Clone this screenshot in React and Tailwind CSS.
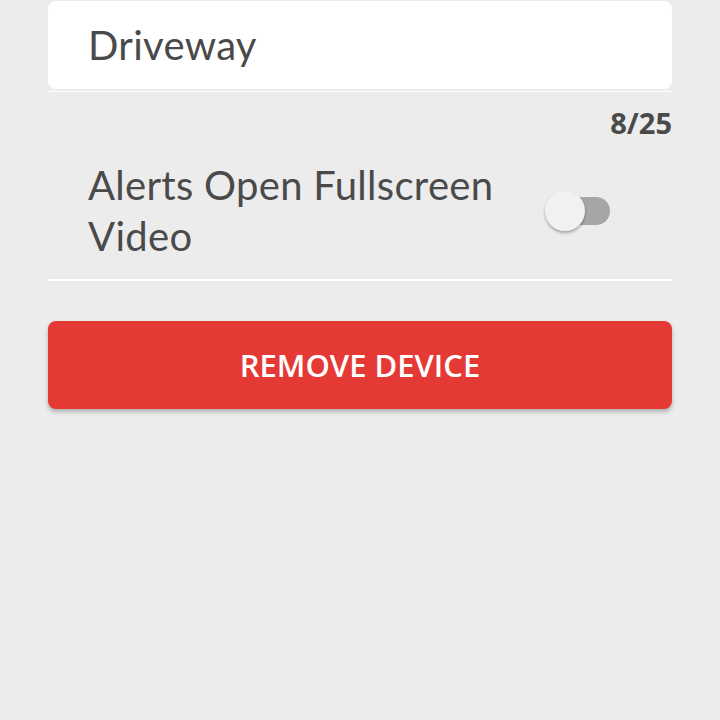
export default function App() {
  return (
    <div className="min-h-[720px] w-[720px] bg-[#ececec] px-[48px] pt-[1px]" style={{ fontFamily: "Lato, 'Open Sans', sans-serif" }}>
      {/* name field */}
      <div className="flex h-[88px] items-center rounded-lg bg-white pl-[40px]">
        <span className="text-[40px] leading-none tracking-[0.3px] text-[#4a4a4a]">Driveway</span>
      </div>
      <div className="mt-[2px] h-[1px] bg-white" />
      <div className="mt-[14px] flex justify-end">
        <span className="text-[29px] font-bold leading-[34px] text-[#4a4a4a]" style={{ fontFamily: "'Open Sans', sans-serif" }}>
          8/25
        </span>
      </div>

      {/* alerts toggle row */}
      <div className="mt-[20px] flex items-center justify-between pl-[40px] pr-[62px]">
        <div className="w-[440px] text-[40px] leading-[51px] tracking-[0.3px] text-[#4a4a4a]">Alerts Open Fullscreen Video</div>
        <div className="relative h-[40px] w-[65px]">
          <div className="absolute left-[4px] top-[6px] h-[28px] w-[61px] rounded-full bg-[#a6a6a6]" />
          <div className="absolute left-0 top-0 h-[40px] w-[40px] rounded-full bg-[#f1f1f1] shadow-[0_2px_3px_rgba(0,0,0,0.3)]" />
        </div>
      </div>
      <div className="mt-[17px] h-[2px] bg-white" />

      <button className="mt-[40px] flex h-[88px] w-full items-center justify-center rounded-lg bg-[#e53935] text-[31px] font-semibold text-white shadow-[0_3px_4px_rgba(0,0,0,0.25)]" style={{ fontFamily: "'Open Sans', sans-serif" }}>
        REMOVE DEVICE
      </button>
    </div>
  );
}
